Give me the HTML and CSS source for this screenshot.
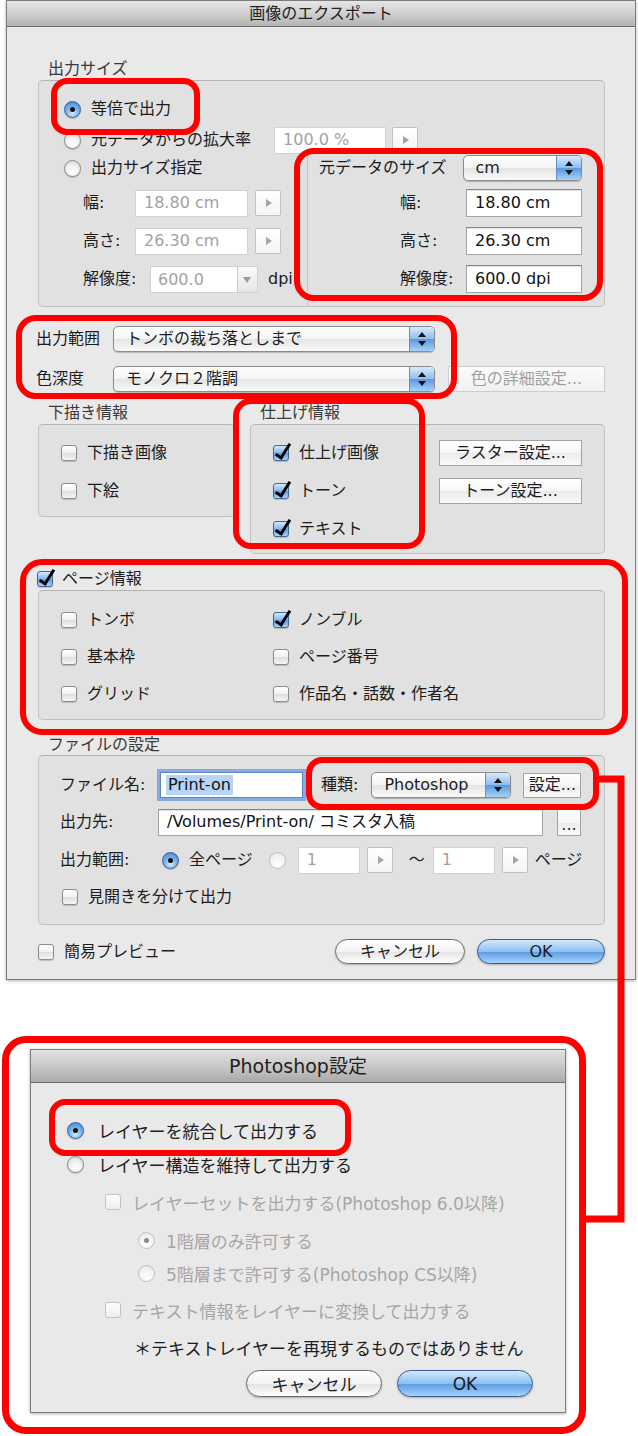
FILE: index.html
```html
<!DOCTYPE html>
<html lang="ja">
<head>
    <meta charset="UTF-8">
    <meta name="viewport" content="width=device-width, initial-scale=1.0">
    <title>画像のエクスポート</title>
    <link rel="stylesheet" href="styles.css">
</head>
<body>
<div class="page">

    <div class="dialog export-dialog">
        <div class="titlebar">画像のエクスポート</div>
        <div class="export-body">

            <!-- 出力サイズ -->
            <div class="group-label size-label">出力サイズ</div>
            <div class="group size-group">
                <div class="row radio-row">
                    <span class="radio on"></span><span class="opt">等倍で出力</span>
                </div>
                <div class="row radio-row scale-row">
                    <span class="radio"></span><span class="opt">元データからの拡大率</span>
                    <span class="field off scale-field">100.0 %</span>
                    <span class="stepper"></span>
                </div>
                <div class="size-split">
                    <div class="size-left">
                        <div class="row radio-row">
                            <span class="radio"></span><span class="opt">出力サイズ指定</span>
                        </div>
                        <div class="row dim-row first-dim">
                            <span class="dim-label">幅:</span>
                            <span class="field off dim-field">18.80 cm</span>
                            <span class="stepper"></span>
                        </div>
                        <div class="row dim-row">
                            <span class="dim-label">高さ:</span>
                            <span class="field off dim-field">26.30 cm</span>
                            <span class="stepper"></span>
                        </div>
                        <div class="row dim-row">
                            <span class="dim-label res-label">解像度:</span>
                            <span class="combo"><span class="combo-text">600.0</span><span class="combo-btn"></span></span>
                            <span class="unit">dpi</span>
                        </div>
                    </div>
                    <div class="size-right">
                        <div class="row source-row">
                            <span class="source-title">元データのサイズ</span>
                            <span class="popup unit-popup"><span class="popup-text">cm</span><span class="popup-arrows"></span></span>
                        </div>
                        <div class="row source-dim first-dim">
                            <span class="source-label">幅:</span>
                            <span class="field source-field">18.80 cm</span>
                        </div>
                        <div class="row source-dim">
                            <span class="source-label">高さ:</span>
                            <span class="field source-field">26.30 cm</span>
                        </div>
                        <div class="row source-dim">
                            <span class="source-label">解像度:</span>
                            <span class="field source-field">600.0 dpi</span>
                        </div>
                    </div>
                </div>
            </div>

            <!-- 出力範囲 / 色深度 -->
            <div class="row range-row">
                <span class="range-label">出力範囲</span>
                <span class="popup wide-popup"><span class="popup-text">トンボの裁ち落としまで</span><span class="popup-arrows"></span></span>
            </div>
            <div class="row depth-row">
                <span class="range-label">色深度</span>
                <span class="popup wide-popup"><span class="popup-text">モノクロ２階調</span><span class="popup-arrows"></span></span>
                <span class="bevel off color-btn">色の詳細設定...</span>
            </div>

            <!-- 下描き情報 / 仕上げ情報 -->
            <div class="info-split">
                <div class="draft-col">
                    <div class="group-label">下描き情報</div>
                    <div class="group info-group draft-group">
                        <div class="row check-row">
                            <span class="check"></span><span class="opt">下描き画像</span>
                        </div>
                        <div class="row check-row next">
                            <span class="check"></span><span class="opt">下絵</span>
                        </div>
                    </div>
                </div>
                <div class="finish-col">
                    <div class="group-label">仕上げ情報</div>
                    <div class="group info-group finish-group">
                        <div class="row check-row">
                            <span class="check on"></span><span class="opt">仕上げ画像</span>
                            <span class="bevel finish-btn">ラスター設定...</span>
                        </div>
                        <div class="row check-row next">
                            <span class="check on"></span><span class="opt">トーン</span>
                            <span class="bevel finish-btn">トーン設定...</span>
                        </div>
                        <div class="row check-row next">
                            <span class="check on"></span><span class="opt">テキスト</span>
                        </div>
                    </div>
                </div>
            </div>

            <!-- ページ情報 -->
            <div class="row page-head">
                <span class="check on"></span><span class="opt">ページ情報</span>
            </div>
            <div class="group page-group">
                <div class="row page-item"><span class="check"></span><span class="opt">トンボ</span></div>
                <div class="row page-item"><span class="check on"></span><span class="opt">ノンブル</span></div>
                <div class="row page-item"><span class="check"></span><span class="opt">基本枠</span></div>
                <div class="row page-item"><span class="check"></span><span class="opt">ページ番号</span></div>
                <div class="row page-item"><span class="check"></span><span class="opt">グリッド</span></div>
                <div class="row page-item"><span class="check"></span><span class="opt">作品名・話数・作者名</span></div>
            </div>

            <!-- ファイルの設定 -->
            <div class="group-label file-label">ファイルの設定</div>
            <div class="group file-group">
                <div class="row file-row">
                    <span class="file-key">ファイル名:</span>
                    <span class="field name-field"><span class="selected">Print-on</span></span>
                    <span class="type-key">種類:</span>
                    <span class="popup type-popup"><span class="popup-text">Photoshop</span><span class="popup-arrows"></span></span>
                    <span class="bevel setting-btn">設定...</span>
                </div>
                <div class="row file-row dest-row">
                    <span class="file-key">出力先:</span>
                    <span class="field dest-field">/Volumes/Print-on/ コミスタ入稿</span>
                    <span class="bevel browse-btn">...</span>
                </div>
                <div class="row file-row pages-row">
                    <span class="file-key">出力範囲:</span>
                    <span class="radio on all-radio"></span><span class="opt">全ページ</span>
                    <span class="radio off from-radio"></span>
                    <span class="field off page-field">1</span>
                    <span class="stepper page-step"></span>
                    <span class="tilde">〜</span>
                    <span class="field off page-field to-field">1</span>
                    <span class="stepper page-step"></span>
                    <span class="page-unit">ページ</span>
                </div>
                <div class="row file-row spread-row">
                    <span class="check"></span><span class="opt">見開きを分けて出力</span>
                </div>
            </div>

            <div class="row footer-row">
                <span class="check"></span><span class="opt">簡易プレビュー</span>
                <span class="push cancel-btn">キャンセル</span>
                <span class="push default ok-btn">OK</span>
            </div>
        </div>
    </div>

    <div class="dialog ps-dialog">
        <div class="titlebar ps-title">Photoshop設定</div>
        <div class="ps-body">
            <div class="ps-row ps-first">
                <span class="radio on"></span><span class="ps-opt">レイヤーを統合して出力する</span>
            </div>
            <div class="ps-row ps-keep">
                <span class="radio"></span><span class="ps-opt">レイヤー構造を維持して出力する</span>
            </div>
            <div class="ps-row ps-set ps-indent1">
                <span class="check off"></span><span class="ps-opt off">レイヤーセットを出力する(Photoshop 6.0以降)</span>
            </div>
            <div class="ps-row ps-level ps-indent2">
                <span class="radio off on"></span><span class="ps-opt off">1階層のみ許可する</span>
            </div>
            <div class="ps-row ps-level5 ps-indent2">
                <span class="radio off"></span><span class="ps-opt off">5階層まで許可する(Photoshop CS以降)</span>
            </div>
            <div class="ps-row ps-text ps-indent1">
                <span class="check off"></span><span class="ps-opt off">テキスト情報をレイヤーに変換して出力する</span>
            </div>
            <div class="ps-row ps-note">＊テキストレイヤーを再現するものではありません</div>
            <div class="ps-buttons">
                <span class="push ps-btn">キャンセル</span>
                <span class="push default ps-btn">OK</span>
            </div>
        </div>
    </div>

    <!-- red annotations -->
    <div class="mark mark-actual"></div>
    <div class="mark mark-source"></div>
    <div class="mark mark-range"></div>
    <div class="mark mark-finish"></div>
    <div class="mark mark-page"></div>
    <div class="mark mark-type"></div>
    <div class="mark mark-ps"></div>
    <div class="mark mark-merge"></div>
    <svg class="connector" width="638" height="1436" viewBox="0 0 638 1436">
        <polyline points="596,779 621,779 621,1219 582,1219" fill="none" stroke="#f00" stroke-width="7"/>
    </svg>
</div>
</body>
</html>
```

FILE: styles.css
```css
* {
    margin: 0;
    padding: 0;
    box-sizing: border-box;
}

body {
    background: #fff;
    font-family: "DejaVu Sans", "Noto Sans CJK JP", sans-serif;
    font-size: 16px;
    color: #1c1c1c;
}

.page {
    position: relative;
    width: 638px;
    height: 1436px;
    overflow: hidden;
}

/* dialogs */
.dialog {
    background: #e9e9e9;
    border: 1px solid #7c7c7c;
    box-shadow: 0 1px 3px rgba(0, 0, 0, 0.3);
}

.export-dialog {
    margin-left: 6px;
    width: 630px;
}

.titlebar {
    height: 26px;
    line-height: 25px;
    text-align: center;
    color: #222;
    background: linear-gradient(#e6e6e6, #cdcdcd 55%, #b3b3b3);
    border-bottom: 1px solid #6c6c6c;
}

.export-body {
    padding: 0 30px 15px 31px;
}

.row {
    display: flex;
    align-items: center;
    height: 28px;
    line-height: 20px;
    white-space: nowrap;
}

.group-label {
    height: 21px;
    line-height: 21px;
    padding-left: 10px;
    color: #3a3a3a;
}

.group {
    margin-top: 1px;
    background: #e1e1e1;
    border: 1px solid #c0c0c0;
    border-top-color: #b4b4b4;
    border-radius: 5px;
}

.opt {
    margin-left: 10px;
}

/* controls */
.radio {
    position: relative;
    flex: none;
    width: 17px;
    height: 17px;
    border-radius: 50%;
    border: 1px solid #8a8a8a;
    background: radial-gradient(circle at 50% 72%, #ffffff 0, #f2f2f2 45%, #cfcfcf 100%);
    box-shadow: 0 1px 1px rgba(0, 0, 0, 0.2);
}

.radio.on {
    border-color: #3b5f91;
    background: radial-gradient(circle at 50% 75%, #d2ecff 0, #79b3ec 45%, #3b7bd0 100%);
}

.radio.on::after {
    content: "";
    position: absolute;
    left: 5px;
    top: 5px;
    width: 5px;
    height: 5px;
    border-radius: 50%;
    background: #111;
}

.radio.off {
    border-color: #c0c0c0;
    box-shadow: none;
    background: radial-gradient(circle at 50% 72%, #fff 0, #f0f0f0 60%, #e2e2e2 100%);
}

.radio.off.on::after {
    background: #8a8a8a;
}

.check {
    position: relative;
    flex: none;
    width: 16px;
    height: 16px;
    border: 1px solid #8c8c8c;
    border-radius: 3px;
    background: linear-gradient(#ffffff, #f1f1f1 50%, #dedede 51%, #f6f6f6);
    box-shadow: 0 1px 1px rgba(0, 0, 0, 0.18);
}

.check.on {
    border-color: #41669a;
    background: linear-gradient(#d3e8fc, #84b9ee 50%, #5b9ae2 51%, #a9d3fa);
}

.check.on::after {
    content: "";
    position: absolute;
    left: 5px;
    top: -5px;
    width: 5px;
    height: 15px;
    border-right: 3px solid #000;
    border-bottom: 3px solid #000;
    transform: rotate(32deg);
}

.check.off {
    border-color: #c4c4c4;
    box-shadow: none;
    background: linear-gradient(#fdfdfd, #eeeeee);
}

.field {
    display: flex;
    align-items: center;
    flex: none;
    height: 27px;
    padding: 0 8px;
    background: #fff;
    border: 1px solid #a4a4a4;
    border-top-color: #868686;
    box-shadow: inset 0 1px 1px rgba(0, 0, 0, 0.12);
    color: #111;
}

.field.off {
    color: #a2a2a2;
    border-color: #d2d2d2;
    box-shadow: none;
}

.stepper {
    position: relative;
    flex: none;
    width: 26px;
    height: 26px;
    border: 1px solid #c2c2c2;
    border-radius: 2px;
    background: linear-gradient(#fff, #f4f4f4);
}

.stepper::after {
    content: "";
    position: absolute;
    left: 10px;
    top: 8px;
    border-left: 6px solid #a4a4a4;
    border-top: 4px solid transparent;
    border-bottom: 4px solid transparent;
}

.popup {
    display: flex;
    flex: none;
    height: 26px;
    border: 1px solid #8b8b8b;
    border-radius: 5px;
    overflow: hidden;
    background: linear-gradient(#ffffff, #f4f4f4 50%, #e4e4e4 51%, #fafafa);
    box-shadow: 0 1px 1px rgba(0, 0, 0, 0.22);
}

.popup-text {
    flex: 1;
    padding-left: 12px;
    line-height: 24px;
}

.popup-arrows {
    position: relative;
    width: 25px;
    border-left: 1px solid #6a8dbf;
    background: linear-gradient(#d8eafc, #8ebdee 50%, #5a98e1 51%, #a7d1f8);
}

.popup-arrows::before,
.popup-arrows::after {
    content: "";
    position: absolute;
    left: 8px;
    border-left: 4px solid transparent;
    border-right: 4px solid transparent;
}

.popup-arrows::before {
    top: 5px;
    border-bottom: 5px solid #111;
}

.popup-arrows::after {
    bottom: 5px;
    border-top: 5px solid #111;
}

.bevel {
    display: flex;
    align-items: center;
    justify-content: center;
    flex: none;
    height: 26px;
    border: 1px solid #a2a2a2;
    background: linear-gradient(#ffffff, #f6f6f6 50%, #ebebeb 51%, #f9f9f9);
}

.bevel.off {
    color: #a0a0a0;
    border-color: #cdcdcd;
    background: linear-gradient(#fbfbfb, #f1f1f1);
}

.push {
    display: flex;
    align-items: center;
    justify-content: center;
    flex: none;
    height: 25px;
    border: 1px solid #6a6a6a;
    border-radius: 13px;
    background: linear-gradient(#ffffff, #f3f3f3 50%, #e3e3e3 51%, #ffffff);
    box-shadow: 0 1px 2px rgba(0, 0, 0, 0.25);
}

.push.default {
    border-color: #3b5c8e;
    background: linear-gradient(#d3e8fc, #8ec0f0 50%, #5c9ce3 51%, #a5d2fb);
}

/* 出力サイズ */
.size-label {
    margin-top: 31px;
}

.size-group {
    padding: 14px 0 13px;
}

.radio-row {
    padding-left: 25px;
}

.scale-row {
    margin-top: 3px;
}

.scale-field {
    width: 112px;
    margin-left: 23px;
}

.scale-row .stepper {
    margin-left: 6px;
}

.size-split {
    display: flex;
}

.size-left {
    width: 268px;
}

.dim-row {
    padding-left: 44px;
    margin-top: 10px;
}

.dim-row.first-dim {
    margin-top: 7px;
}

.dim-label {
    width: 52px;
}

.dim-label.res-label {
    width: 67px;
}

.dim-field {
    width: 113px;
}

.dim-row .stepper {
    margin-left: 7px;
}

.combo {
    display: flex;
    width: 108px;
    height: 27px;
    background: #fff;
    border: 1px solid #d0d0d0;
    color: #a2a2a2;
}

.combo-text {
    flex: 1;
    padding-left: 7px;
    line-height: 25px;
}

.combo-btn {
    position: relative;
    width: 20px;
    border-left: 1px solid #c8c8c8;
    background: linear-gradient(#fafafa, #e6e6e6);
}

.combo-btn::after {
    content: "";
    position: absolute;
    left: 5px;
    top: 10px;
    border-top: 6px solid #9a9a9a;
    border-left: 4px solid transparent;
    border-right: 4px solid transparent;
}

.unit {
    margin-left: 10px;
}

.size-right {
    flex: 1;
    border-left: 1px solid #c6c6c6;
    margin-bottom: -13px;
}

.source-row {
    padding-left: 11px;
}

.unit-popup {
    width: 119px;
    margin-left: 16px;
}

.source-dim {
    padding-left: 92px;
    margin-top: 10px;
}

.source-dim.first-dim {
    margin-top: 7px;
}

.source-label {
    width: 66px;
}

.source-field {
    width: 116px;
    height: 28px;
}

/* 出力範囲 / 色深度 */
.range-row {
    margin-top: 18px;
    margin-left: -2px;
}

.depth-row {
    margin-top: 12px;
    margin-left: -2px;
}

.range-label {
    width: 77px;
}

.wide-popup {
    width: 322px;
}

.color-btn {
    width: 157px;
    margin-left: 13px;
}

/* 下描き / 仕上げ */
.info-split {
    display: flex;
    align-items: flex-start;
    margin-top: 9px;
}

.draft-col {
    width: 197px;
}

.finish-col {
    flex: 1;
    margin-left: 15px;
}

.info-group {
    padding: 14px 22px 11px 22px;
}

.finish-group {
    padding-bottom: 10px;
}

.check-row .opt {
    margin-left: 10px;
}

.check-row.next {
    margin-top: 10px;
}

.finish-btn {
    width: 143px;
    margin-left: auto;
}

/* ページ情報 */
.page-head {
    height: 20px;
    margin-top: 15px;
    margin-left: -1px;
}

.page-head .opt {
    margin-left: 9px;
}

.page-group {
    display: grid;
    grid-template-columns: 212px 1fr;
    row-gap: 9px;
    padding: 15px 22px 11px;
}

.page-item .opt {
    margin-left: 10px;
}

/* ファイルの設定 */
.file-label {
    margin-top: 14px;
}

.file-group {
    margin-top: 0;
    padding: 15px 0 13px 21px;
}

.file-key {
    width: 98px;
}

.name-field {
    width: 143px;
    height: 26px;
    margin-left: 2px;
    padding-left: 5px;
    box-shadow: 0 0 0 3px #86acdf;
    border-color: #5f86bd;
}

.selected {
    background: #b6d4f6;
    padding: 0 2px;
}

.type-key {
    margin-left: 18px;
}

.type-popup {
    width: 140px;
    margin-left: 13px;
}

.setting-btn {
    width: 58px;
    height: 25px;
    margin-left: 12px;
}

.dest-row {
    margin-top: 9px;
}

.dest-field {
    width: 385px;
}

.browse-btn {
    width: 24px;
    height: 27px;
    margin-left: 14px;
    align-items: flex-end;
    padding-bottom: 4px;
    line-height: 12px;
}

.pages-row {
    margin-top: 10px;
}

.all-radio {
    margin-left: 4px;
}

.from-radio {
    margin-left: 16px;
}

.page-field {
    width: 62px;
    margin-left: 12px;
}

.page-field.to-field {
    margin-left: 0;
}

.page-step {
    margin-left: 7px;
}

.tilde {
    margin-left: 16px;
    width: 24px;
}

.page-unit {
    margin-left: 7px;
}

.spread-row {
    margin-top: 9px;
    padding-left: 2px;
}

.spread-row .opt {
    margin-left: 10px;
}

.footer-row {
    height: 25px;
    margin-top: 14px;
}

.cancel-btn {
    width: 130px;
    margin-left: auto;
}

.ok-btn {
    width: 128px;
    margin-left: 12px;
}

/* Photoshop設定 */
.ps-dialog {
    width: 536px;
    margin: 69px 0 0 30px;
    font-size: 17px;
}

.ps-title {
    height: 33px;
    line-height: 32px;
    font-size: 19px;
    background: linear-gradient(#e2e2e2, #c6c6c6 55%, #a9a9a9);
}

.ps-body {
    padding: 0 32px 15px 36px;
}

.ps-row {
    display: flex;
    align-items: center;
    height: 24px;
    white-space: nowrap;
}

.ps-opt {
    margin-left: 14px;
}

.ps-opt.off {
    color: #a6a6a6;
    margin-left: 11px;
}

.ps-first {
    margin-top: 35px;
}

.ps-keep {
    margin-top: 10px;
}

.ps-set {
    margin-top: 14px;
}

.ps-level {
    margin-top: 14px;
}

.ps-level5 {
    margin-top: 9px;
}

.ps-text {
    margin-top: 13px;
}

.ps-indent1 {
    padding-left: 38px;
}

.ps-indent2 {
    padding-left: 71px;
}

.ps-note {
    margin-top: 13px;
    padding-left: 67px;
}

.ps-buttons {
    display: flex;
    justify-content: flex-end;
    gap: 15px;
    margin-top: 11px;
}

.ps-btn {
    width: 136px;
    height: 27px;
    border-radius: 14px;
}

/* red annotations */
.mark {
    position: absolute;
    border: 6px solid #f00;
    border-radius: 16px;
    pointer-events: none;
}

.mark-actual { left: 51px; top: 78px; width: 149px; height: 57px; }
.mark-source { left: 294px; top: 148px; width: 309px; height: 153px; border-radius: 20px; }
.mark-range  { left: 16px; top: 315px; width: 441px; height: 84px; border-radius: 20px; }
.mark-finish { left: 233px; top: 398px; width: 192px; height: 151px; border-radius: 18px; }
.mark-page   { left: 20px; top: 559px; width: 608px; height: 176px; border-radius: 22px; }
.mark-type   { left: 306px; top: 757px; width: 293px; height: 53px; }
.mark-ps     { left: 2px; top: 1036px; width: 584px; height: 398px; border-width: 7px; border-radius: 24px; }
.mark-merge  { left: 49px; top: 1099px; width: 302px; height: 57px; }

.connector {
    position: absolute;
    left: 0;
    top: 0;
    pointer-events: none;
}
```
